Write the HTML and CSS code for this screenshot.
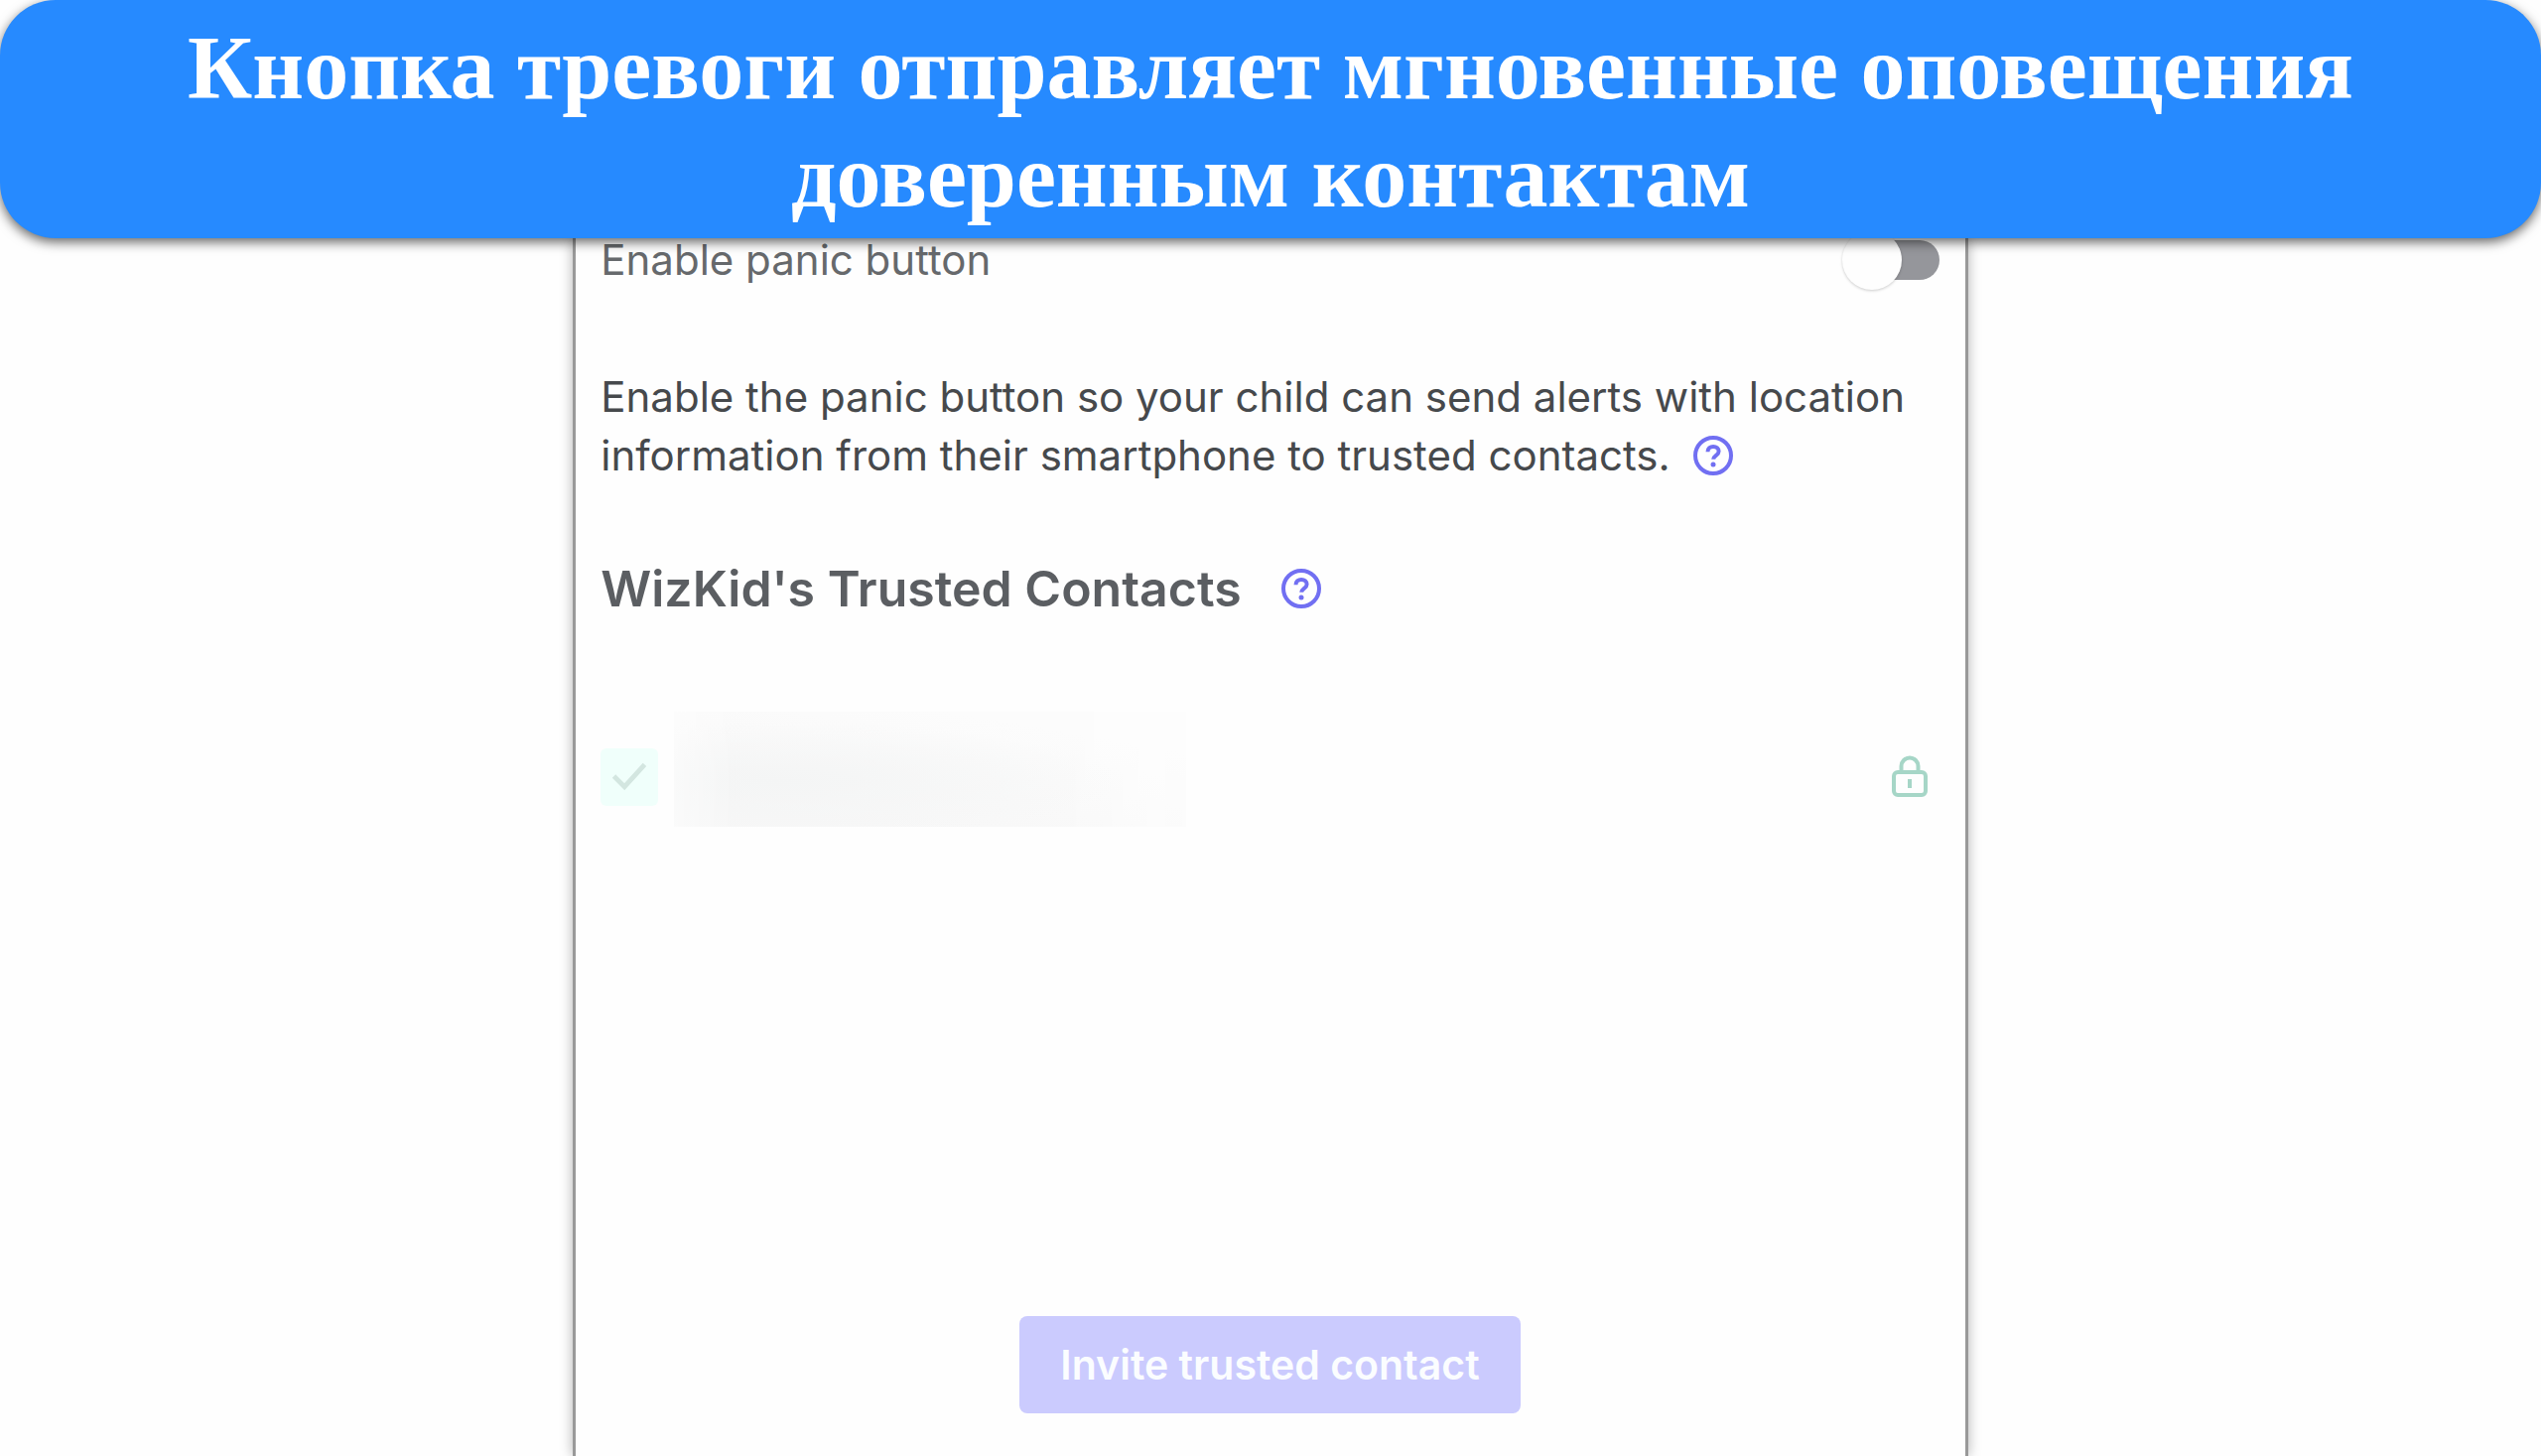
FILE: index.html
```html
<!DOCTYPE html>
<html lang="ru">
<head>
<meta charset="utf-8">
<meta name="viewport" content="width=device-width, initial-scale=1">
<title>Кнопка тревоги</title>
<link rel="stylesheet" href="styles.css">
</head>
<body>
<header class="banner">
  <h1 class="banner-title">Кнопка тревоги отправляет мгновенные оповещения доверенным контактам</h1>
</header>
<main class="panel" lang="en">
  <div class="switch-row">
    <label class="switch-label" for="panic">Enable panic button</label>
    <input class="switch" type="checkbox" role="switch" id="panic">
  </div>
  <p class="intro">Enable the panic button so your child can send alerts with location information from their smartphone to trusted contacts. <button class="help" type="button" aria-label="About the panic button"><svg class="help-icon" viewBox="0 0 40 40" aria-hidden="true"><circle cx="20" cy="20" r="18"/><path d="M14.500 16.200c0-3.400 2.400-5.300 5.600-5.300s5.500 1.900 5.500 4.800c0 4.100-5.400 4.100-5.400 8.100"/><circle class="dot" cx="20" cy="29" r="2.500"/></svg></button></p>
  <div class="heading-row">
    <h2 class="heading">WizKid's Trusted Contacts</h2>
    <button class="help" type="button" aria-label="About trusted contacts"><svg class="help-icon" viewBox="0 0 40 40" aria-hidden="true"><circle cx="20" cy="20" r="18"/><path d="M14.500 16.200c0-3.400 2.400-5.300 5.600-5.300s5.500 1.900 5.500 4.800c0 4.100-5.400 4.100-5.400 8.100"/><circle class="dot" cx="20" cy="29" r="2.500"/></svg></button>
  </div>
  <div class="contact">
    <svg class="tick" viewBox="0 0 60 60" aria-hidden="true"><path d="M14 29l11 11 21-23"/></svg>
    <div class="redacted"></div>
    <svg class="lock" viewBox="0 0 36 42" aria-hidden="true"><rect x="2" y="17" width="32" height="23" rx="4"/><path d="M9.500 17v-6a8.500 8.500 0 0 1 17 0v6"/><path d="M18 24v9"/></svg>
  </div>
  <button class="invite" type="button">Invite trusted contact</button>
</main>
</body>
</html>
```
FILE: styles.css
```css
* { box-sizing: border-box; }

body {
  margin: 0;
  min-height: 100vh;
  display: flex;
  flex-direction: column;
  align-items: center;
  background: #fefefe;
  font-family: Inter, "Open Sans", sans-serif;
  color: #46494c;
}

.banner {
  position: relative;
  z-index: 1;
  width: 100%;
  padding: 14px 160px 8px;
  border-radius: 56px;
  background: #268aff;
  box-shadow: 0 4px 12px rgba(0, 0, 0, 0.6);
}

.banner-title {
  margin: 0;
  font: bold 90px/109px "Liberation Serif", serif;
  text-align: center;
  color: #fff;
}

.panel {
  flex: 1;
  display: flex;
  flex-direction: column;
  width: 54.9%;
  padding: 0 26px 43px 25px;
  border: 3px solid #999;
  border-width: 0 3px;
  background: #fefefe;
  box-shadow: 0 0 12px rgba(0, 0, 0, 0.3);
}

.switch-row {
  display: flex;
  align-items: center;
  justify-content: space-between;
  height: 44px;
}

.switch-label {
  font-size: 42px;
  line-height: 60px;
  color: #66696c;
}

.switch {
  appearance: none;
  position: relative;
  width: 98px;
  height: 60px;
  margin: 0;
}

.switch::before {
  content: "";
  position: absolute;
  inset: 10px 0 10px 8px;
  border-radius: 20px;
  background: #95969b;
}

.switch::after {
  content: "";
  position: absolute;
  left: 0;
  top: 0;
  width: 60px;
  height: 60px;
  border-radius: 50%;
  background: #fefefe;
  box-shadow: 0 1px 3px rgba(0, 0, 0, 0.2);
}

.intro {
  margin: 86px 0 0;
  font-size: 42px;
  line-height: 59px;
}

.help {
  width: 40px;
  height: 40px;
  padding: 0;
  border: 0;
  background: none;
  vertical-align: -5px;
}

.intro .help { margin-left: 12px; }

.help-icon {
  display: block;
  width: 40px;
  height: 40px;
  fill: none;
  stroke: #716ff2;
  stroke-width: 4;
}

.dot { fill: #716ff2; stroke: none; }

.heading-row {
  display: flex;
  align-items: center;
  gap: 40px;
  margin-top: 75px;
}

.heading {
  margin: 0;
  font-size: 50px;
  line-height: 60px;
  font-weight: 600;
  color: #5b5e62;
}

.contact {
  display: flex;
  align-items: center;
  margin-top: 94px;
}

.tick {
  width: 58px;
  height: 58px;
  margin-top: 16px;
  border-radius: 6px;
  background: #f0fffb;
  fill: none;
  stroke: #d3e6e0;
  stroke-width: 5;
}

.redacted {
  width: 516px;
  height: 116px;
  margin: 0 auto 0 16px;
  background:
    radial-gradient(ellipse at 20% 60%, #f4f5f5, transparent 60%),
    linear-gradient(190deg, #fcfcfc 20%, #f7f7f7 85%);
  mask-image: linear-gradient(90deg, #0008, #000 12%, #000 75%, #0006);
}

.lock {
  width: 36px;
  height: 42px;
  margin: 14px 12px 0 0;
  fill: none;
  stroke: #a6d6c7;
  stroke-width: 4;
}

.invite {
  align-self: center;
  margin-top: auto;
  padding: 19px 41px;
  border: 0;
  border-radius: 8px;
  background: #cbcbfe;
  color: #fbfdff;
  font: 600 41px/60px Inter, "Open Sans", sans-serif;
}
```
